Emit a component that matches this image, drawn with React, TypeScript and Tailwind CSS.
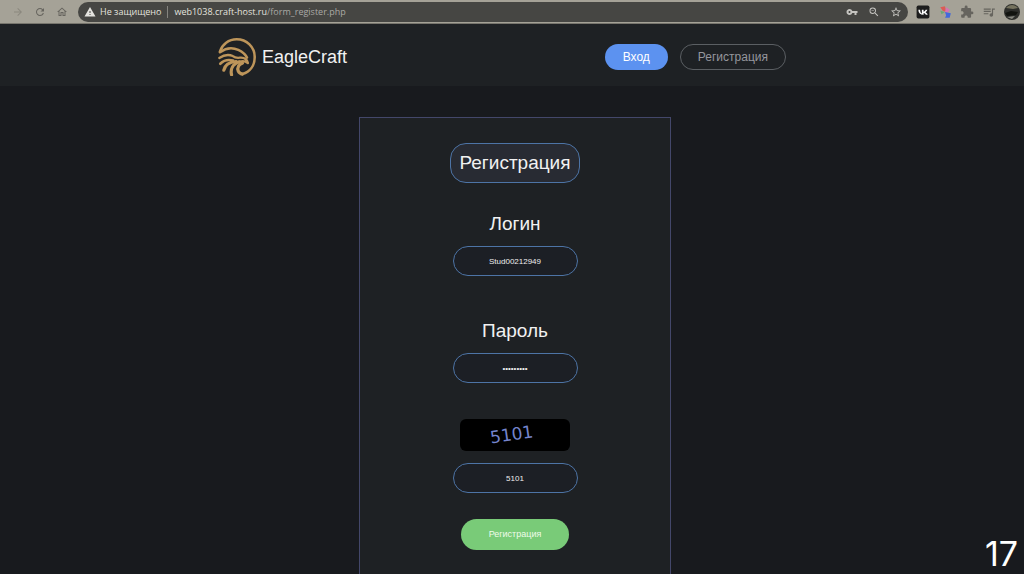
import { useState } from 'react'
import type { FormEvent, InputHTMLAttributes } from 'react'
import { MdArrowForward, MdExtension, MdOutlineHome, MdQueueMusic, MdRefresh, MdStarBorder, MdVpnKey, MdWarning, MdZoomOut } from 'react-icons/md'

function EagleLogo() {
  return (
    <svg viewBox="4 4 118 118" className="w-[38px] h-[38px]" fill="none" stroke="#bd955a" strokeLinecap="round" strokeLinejoin="round" aria-hidden="true">
      {/* outer ring and crown */}
      <path d="M10 46C17 24 37 8 62 8c31 0 56 24 56 55 0 26-14 46-38 53" strokeWidth="8" />
      <path d="M10 48c18-13 38-16 57-7 12 6 22 13 27 24" strokeWidth="8" />
      {/* brow and beak */}
      <path d="M8 66c12-8 28-12 42-6 6 5 14 6 22 5 12-1 22 4 25 17-8-7-16-8-25-5" strokeWidth="7" />
      {/* feathers */}
      <path d="M11 84c10-10 24-14 40-10" strokeWidth="8" />
      <path d="M22 104c3-15 15-25 38-27" strokeWidth="10" />
      <path d="M46 118c-4-17 4-33 24-40" strokeWidth="10" />
      <path d="M80 116c-13-2-18-14-12-25 3-5 7-8 12-9" strokeWidth="10" />
    </svg>
  )
}

function VkIcon() {
  return (
    <svg viewBox="0 0 24 24" className="w-3.5 h-3.5" aria-hidden="true">
      <rect x="1" y="1" width="22" height="22" rx="3" fill="#1d1d1d" />
      <path d="M4 8h3c.3 4 1.700 6 3 6.500V8h3v3.500c1.500-.2 2.800-1.700 3.500-3.500h3c-.5 2-2 3.500-3 4.300 1.200.7 2.800 2 3.500 4.200h-3.300c-.7-1.600-1.900-2.700-3.700-3v3h-.5C7.500 16.500 4.200 13.500 4 8z" fill="#ffffff" />
    </svg>
  )
}

function PinwheelIcon() {
  return (
    <svg viewBox="0 0 12 12" className="w-3.5 h-3.5" aria-hidden="true">
      <path d="M2 2l4-1 1 5-3-1z" fill="#dc5a55" />
      <path d="M7 2l3 2-2 3-2-1z" fill="#d673b4" />
      <path d="M2 5l4 1-3 2z" fill="#6aa876" />
      <path d="M6 6l5 1-1 4-4 0 1-2z" fill="#4269dc" />
    </svg>
  )
}

function BrowserBar() {
  return (
    <div className="flex items-center h-6 pl-3 pr-1 border-b border-[#77756d] bg-[#a5a297] text-[#66645e]">
      <div className="flex items-center gap-2.5 pr-2.5">
        <MdArrowForward className="w-3 h-3 text-[#8b887f]" />
        <MdRefresh className="w-3 h-3" />
        <MdOutlineHome className="w-3 h-3" />
      </div>
      <div className="flex flex-1 items-center h-5 px-1.5 rounded-full bg-[#464643] font-['Open_Sans',sans-serif] text-[9px] text-[#e4e3df]">
        <MdWarning className="w-3 h-3 mr-1" />
        <span>Не защищено</span>
        <span className="w-px h-3 mx-1.5 bg-[#85847f]" />
        <span>web1038.craft-host.ru<span className="text-[#aaa9a5]">/form_register.php</span></span>
        <div className="flex items-center gap-2.5 ml-auto text-[#c5c4c0]">
          <MdVpnKey className="w-3 h-3" />
          <MdZoomOut className="w-3 h-3" />
          <MdStarBorder className="w-3 h-3" />
        </div>
      </div>
      <div className="flex items-center gap-2 pl-2">
        <VkIcon />
        <PinwheelIcon />
        <MdExtension className="w-3.5 h-3.5" />
        <MdQueueMusic className="w-3.5 h-3.5" />
        <svg viewBox="0 0 16 16" className="w-4 h-4" aria-hidden="true">
          <circle cx="8" cy="8" r="8" fill="#2d2e2b" />
          <path d="M2 4c3-4 9-4 12 0l-5 1z" fill="#75725e" />
          <path d="M1 9l6-2 7 1-2 3-9 1z" fill="#11130f" />
          <path d="M3 13l8-1-3 3z" fill="#85867e" />
        </svg>
      </div>
    </div>
  )
}

function Field(props: InputHTMLAttributes<HTMLInputElement>) {
  return (
    <input
      {...props}
      className="w-[125px] h-[30px] px-3 border border-[#4d74a6] rounded-full bg-[#1c1f25] text-center text-[8px] text-[#eeeeee] focus:outline-none"
    />
  )
}

export default function App() {
  const [login, setLogin] = useState('Stud00212949')
  const [password, setPassword] = useState('qwerty123')
  const [captcha, setCaptcha] = useState('5101')

  const handleSubmit = (e: FormEvent) => e.preventDefault()

  return (
    <div className="relative flex flex-col min-h-screen bg-[#181a1e] font-['Liberation_Sans',Arial,sans-serif] text-[#f1f1f1]">
      <BrowserBar />

      <header className="pr-5 bg-[#1e2124]">
        <div className="flex items-center justify-between w-full max-w-[568px] mx-auto pt-3.5 pb-2.5">
          <a href="#" className="flex items-center gap-1.5 text-lg leading-6">
            <EagleLogo />
            EagleCraft
          </a>
          <nav className="flex items-center gap-3 text-xs">
            <a href="#" className="flex items-center h-[26px] px-[18px] rounded-full bg-[#5c92f0] text-white">Вход</a>
            <a href="#" className="flex items-center h-[26px] px-[17px] border border-[#5b5f63] rounded-full text-[#95969d]">Регистрация</a>
          </nav>
        </div>
      </header>

      <main className="flex flex-1 justify-center pt-[31px] pl-1.5">
        <form
          onSubmit={handleSubmit}
          className="flex flex-col items-center w-full max-w-[312px] pt-[25px] pb-6 border border-b-0 border-[#43476a] bg-[#1e2124]"
        >
          <h1 className="flex items-center h-10 px-2 border border-[#4d74a6] rounded-2xl bg-[#282b33] text-[19px] leading-6">
            Регистрация
          </h1>

          <label htmlFor="login" className="mt-[29px] mb-2.5 text-[19px] leading-6">Логин</label>
          <Field id="login" type="text" value={login} onChange={e => setLogin(e.target.value)} />

          <label htmlFor="password" className="mt-[43px] mb-2.5 text-[19px] leading-6">Пароль</label>
          <Field id="password" type="password" value={password} onChange={e => setPassword(e.target.value)} />

          <label htmlFor="captcha" className="flex items-center justify-center w-[110px] h-8 mt-9 mb-3 rounded-md bg-black">
            <span className="-rotate-8 pr-1.5 font-['DejaVu_Sans',sans-serif] text-[17px] text-[#7585cc]">5101</span>
          </label>
          <Field id="captcha" type="text" value={captcha} onChange={e => setCaptcha(e.target.value)} />

          <button type="submit" className="w-[108px] h-[31px] mt-[26px] rounded-full bg-[#79cb78] text-[9px] text-[#eefbe9]">
            Регистрация
          </button>
        </form>
      </main>

      <span className="absolute right-1.5 bottom-0 font-['Inter',sans-serif] text-[34px] leading-10 text-white">17</span>
    </div>
  )
}
